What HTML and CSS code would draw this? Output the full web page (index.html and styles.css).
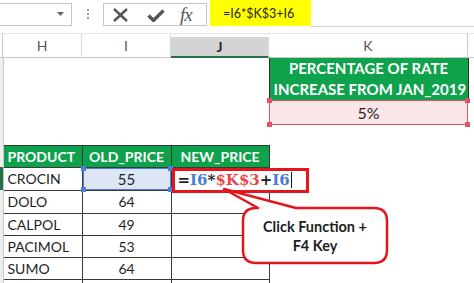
FILE: index.html
```html
<!DOCTYPE html>
<html lang="en">
<head>
    <meta charset="UTF-8">
    <title>Absolute reference - F4</title>
    <link rel="stylesheet" href="styles.css">
</head>
<body>
    <div class="toolbar">
        <div class="namebox">
            <svg width="7" height="4" viewBox="0 0 7 4"><path d="M0 0h7L3.5 4z" fill="#666"/></svg>
        </div>
        <div class="grip"><i></i><i></i><i></i></div>
        <div class="fxbox">
            <svg class="ico-x" width="15" height="14" viewBox="0 0 15 14"><path d="M1 1l13 12M14 1L1 13" stroke="#555" stroke-width="2.4" fill="none"/></svg>
            <svg class="ico-ok" width="18" height="13" viewBox="0 0 18 13"><path d="M1.5 6.5l5 5L16.5 1.5" stroke="#555" stroke-width="3.4" fill="none"/></svg>
            <span class="fx">fx</span>
        </div>
        <div class="formula-hl">=I6*$K$3+I6</div>
        <div class="formula-rest"></div>
    </div>

    <div class="colheads">
        <div class="rh"></div>
        <div class="ch">H</div>
        <div class="ch">I</div>
        <div class="ch active">J</div>
        <div class="ch last">K</div>
        <div></div>
    </div>

    <div class="sheet">
        <table>
            <colgroup>
                <col style="width:3px"><col style="width:79px"><col style="width:89px">
                <col style="width:98px"><col style="width:199px"><col>
            </colgroup>
            <tr class="r-tall">
                <td class="rh"></td><td></td><td></td><td></td>
                <td class="green hd">PERCENTAGE OF RATE<br>INCREASE FROM JAN_2019</td><td></td>
            </tr>
            <tr class="r-pct">
                <td class="rh"></td><td></td><td></td><td></td>
                <td class="pct">
                    <div class="ref-red"><i class="h tl"></i><i class="h tr"></i><i class="h bl"></i><i class="h br"></i></div>
                    5%
                </td><td></td>
            </tr>
            <tr class="r-gap">
                <td class="rh"></td><td></td><td></td><td></td><td></td><td></td>
            </tr>
            <tr class="r-hd">
                <td class="rh"></td>
                <td class="green b">PRODUCT</td>
                <td class="green b c">OLD_PRICE</td>
                <td class="green b c">NEW_PRICE</td>
                <td></td><td></td>
            </tr>
            <tr class="r1">
                <td class="rh on"></td>
                <td class="b">CROCIN</td>
                <td class="b c sel">
                    <div class="ref-blue"><i class="h tl"></i><i class="h tr"></i><i class="h bl"></i><i class="h br"></i></div>
                    55
                </td>
                <td class="b edit-cell">
                    <div class="edit">=<span class="blue">I6</span>*<span class="red">$K$3</span>+<span class="blue">I6</span><span class="caret"></span></div>
                </td>
                <td></td><td></td>
            </tr>
            <tr class="r1">
                <td class="rh"></td><td class="b">DOLO</td><td class="b c">64</td><td class="b"></td><td></td><td></td>
            </tr>
            <tr class="r2">
                <td class="rh"></td><td class="b">CALPOL</td><td class="b c">49</td><td class="b"></td><td></td><td></td>
            </tr>
            <tr class="r2">
                <td class="rh"></td><td class="b">PACIMOL</td><td class="b c">53</td><td class="b"></td><td></td><td></td>
            </tr>
            <tr class="r2">
                <td class="rh"></td><td class="b">SUMO</td><td class="b c">64</td><td class="b"></td><td></td><td></td>
            </tr>
            <tr class="r-end">
                <td class="rh"></td><td class="b"></td><td class="b"></td><td class="b"></td><td></td><td></td>
            </tr>
        </table>

        <svg class="callout-shape" width="170" height="80" viewBox="220 186 170 80">
            <path d="M258 208L224 189L296 208H374Q387 208 387 221V250Q387 263 374 263H256Q243 263 243 250V221Q243 208 256 208Z" fill="#fff" stroke="#e4161d" stroke-width="2.5" stroke-linejoin="round"/>
        </svg>
        <div class="callout-text">Click Function +<br>F4 Key</div>
    </div>
</body>
</html>
```

FILE: styles.css
```css
body {
    margin: 0;
    width: 474px;
    height: 283px;
    overflow: hidden;
    background: #fff;
    font-family: Lato, "Open Sans", sans-serif;
    color: #1e1e1e;
}

/* formula bar */
.toolbar {
    display: flex;
    align-items: flex-start;
    height: 27px;
}
.namebox {
    box-sizing: border-box;
    margin: 3px 0 0 -1px;
    width: 73px;
    height: 23px;
    border: 1px solid #c6c6c6;
    display: flex;
    align-items: center;
    justify-content: flex-end;
    padding: 0 7px 1px 0;
}
.grip {
    margin: 9px 0 0 15px;
    display: flex;
    flex-direction: column;
    gap: 2px;
}
.grip i {
    display: block;
    width: 2px;
    height: 2px;
    background: #9a9a9a;
}
.fxbox {
    box-sizing: border-box;
    margin: 3px 0 0 14px;
    width: 104px;
    height: 23px;
    border: 1px solid #c6c6c6;
    display: flex;
    align-items: center;
}
.ico-x {
    margin-left: 9px;
}
.ico-ok {
    margin-left: 19px;
    margin-top: 1px;
}
.fx {
    margin-left: 15px;
    font-family: "Liberation Serif", serif;
    font-style: italic;
    font-size: 19px;
    color: #555;
    letter-spacing: -1px;
    line-height: 1;
}
.formula-hl {
    box-sizing: border-box;
    margin-left: 3px;
    width: 101px;
    height: 26px;
    padding: 6px 0 0 13px;
    background: #ffff00;
    font-size: 12.5px;
}
.formula-rest {
    flex: 1;
    box-sizing: border-box;
    height: 27px;
    border-bottom: 1px solid #d2d2d2;
}

/* column letters */
.colheads {
    box-sizing: border-box;
    margin-top: 6px;
    height: 25px;
    display: grid;
    grid-template-columns: 3px 79px 89px 98px 199px 1fr;
    border-top: 1px solid #e4e4e4;
    border-bottom: 1px solid #c8c8c8;
}
.colheads .rh {
    border-right: 1px solid #c8c8c8;
}
.ch {
    display: flex;
    align-items: center;
    justify-content: center;
    border-right: 1px solid #d8d8d8;
    font-size: 14px;
    color: #555;
}
.ch.active {
    margin-top: 3px;
    background: #d4d4d4;
    border-bottom: 2px solid #217346;
    margin-bottom: -1px;
    color: #262626;
    font-weight: bold;
}
.ch.last {
    border-right-color: #c8c8c8;
}

/* sheet */
.sheet {
    position: relative;
}
table {
    width: 474px;
    table-layout: fixed;
    border-collapse: collapse;
    font-size: 14px;
}
td {
    padding: 0 4px;
    white-space: nowrap;
}
td.rh {
    padding: 0;
    background: #eeeeee;
    border-right: 1px solid #c8c8c8;
}
td.rh.on {
    background: #217346;
}
.r-tall { height: 42px; }
.r-pct { height: 25px; }
.r-gap { height: 20px; }
.r-hd { height: 22px; }
.r1 { height: 23px; }
.r2 { height: 22px; }
.r-end { height: 4px; }

.b {
    border: 1px solid #3a3a3a;
}
.c {
    text-align: center;
}
.green {
    background: #0ea24c;
    color: #fff;
    font-weight: bold;
}
.hd {
    text-align: center;
    font-size: 15px;
    line-height: 21px;
    border-left: 1px solid #2f2f2f;
    border-right: 1px solid #2f2f2f;
}
.pct {
    position: relative;
    text-align: center;
    background: #fbe6e7;
    font-size: 16px;
}
.ref-red,
.ref-blue {
    position: absolute;
    inset: 0;
    border: 1.5px solid #e05565;
}
.ref-blue {
    border-color: #4f7fd8;
}
.h {
    position: absolute;
    width: 5px;
    height: 5px;
    background: #e05565;
}
.ref-blue .h {
    background: #4f7fd8;
}
.tl { left: -3px; top: -3px; }
.tr { right: -3px; top: -3px; }
.bl { left: -3px; bottom: -3px; }
.br { right: -3px; bottom: -3px; }
.sel {
    position: relative;
    background: #dce6f4;
    font-size: 15px;
}

.edit-cell {
    position: relative;
}
.edit {
    position: absolute;
    left: 0;
    top: 0;
    z-index: 1;
    box-sizing: border-box;
    width: 137px;
    height: 25px;
    padding-left: 3px;
    border: 3px solid #e4161d;
    background: #fff;
    display: flex;
    align-items: center;
    font-family: "DejaVu Serif", serif;
    font-weight: bold;
    font-size: 15px;
    color: #1e1e1e;
}
.blue {
    color: #4a7ed0;
}
.red {
    color: #e8484a;
}
.caret {
    width: 1px;
    height: 16px;
    margin-left: 1px;
    background: #111;
}

/* callout */
.callout-shape {
    position: absolute;
    left: 220px;
    top: 128px;
    z-index: 2;
}
.callout-text {
    position: absolute;
    left: 243px;
    top: 150px;
    z-index: 3;
    width: 144px;
    height: 55px;
    display: flex;
    align-items: center;
    justify-content: center;
    text-align: center;
    font-weight: bold;
    font-size: 14.5px;
    line-height: 19px;
}
```
